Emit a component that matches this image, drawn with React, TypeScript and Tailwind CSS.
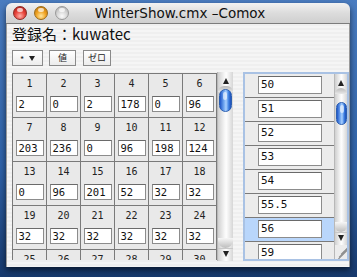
import React from 'react'

const GRID_ROWS: [number, string][][] = [
  [[1, '2'], [2, '0'], [3, '2'], [4, '178'], [5, '0'], [6, '96']],
  [[7, '203'], [8, '236'], [9, '0'], [10, '96'], [11, '198'], [12, '124']],
  [[13, '0'], [14, '96'], [15, '201'], [16, '52'], [17, '32'], [18, '32']],
  [[19, '32'], [20, '32'], [21, '32'], [22, '32'], [23, '32'], [24, '32']],
  [[25, '32'], [26, '32'], [27, '32'], [28, '32'], [29, '32'], [30, '32']],
]

const LIST = ['50', '51', '52', '53', '54', '55.5', '56', '59']

const MONO = 'font-["DejaVu_Sans_Mono",monospace]'

function Light({ tone }: { tone: 'red' | 'yellow' | 'gray' }) {
  const bg =
    tone === 'red'
      ? 'bg-[radial-gradient(circle_at_50%_75%,#ffb0a8_0%,#e8453c_45%,#a8150f_100%)] border-[#8a2a25]'
      : tone === 'yellow'
        ? 'bg-[radial-gradient(circle_at_50%_75%,#ffe7a0_0%,#f0a323_45%,#b06a08_100%)] border-[#9a6a1a]'
        : 'bg-[radial-gradient(circle_at_50%_75%,#fafafa_0%,#d4d4d4_50%,#a8a8a8_100%)] border-[#999]'
  return (
    <span className={`relative w-[14px] h-[14px] rounded-full border ${bg}`}>
      <span className="absolute left-[3px] top-[1px] w-[6px] h-[4px] rounded-full bg-white/70" />
    </span>
  )
}

function Scrollbar({ thumbTop, small }: { thumbTop: number; small?: boolean }) {
  return (
    <div
      className={`${small ? 'w-[13px]' : 'w-[16px]'} h-full flex flex-col items-center border-l border-[#b8b8b8] bg-[linear-gradient(90deg,#d0d0d0,#f7f7f7_45%,#fdfdfd_55%,#d6d6d6)]`}
    >
      <div className="h-[14px] w-full flex items-end justify-center pb-[2px]">
        <span className="w-0 h-0 border-l-[3.5px] border-r-[3.5px] border-b-[6px] border-l-transparent border-r-transparent border-b-[#222]" />
      </div>
      <div className="w-full rounded-t-full h-[6px] bg-[linear-gradient(180deg,#b8b8b8,#e8e8e8)]" />
      <div
        style={{ marginTop: thumbTop }}
        className={`${small ? 'w-[11px]' : 'w-[13px]'} h-[23px] rounded-full border border-[#2c5fb0] bg-[linear-gradient(90deg,#1f56c8,#6fa6f0_35%,#a9d0ff_55%,#3a7de0_80%,#1e4fb8)] relative`}
      >
        <span className="absolute left-[3px] top-[2px] w-[4px] h-[8px] rounded-full bg-white/60" />
      </div>
      <div className="flex-1" />
      <div className="w-full rounded-b-full h-[10px] bg-[linear-gradient(180deg,#f6f6f6,#bdbdbd)]" />
      <div className="h-[13px] w-full flex items-start justify-center pt-[2px] border-t border-[#c8c8c8]">
        <span className="w-0 h-0 border-l-[3.5px] border-r-[3.5px] border-t-[6px] border-l-transparent border-r-transparent border-t-[#222]" />
      </div>
    </div>
  )
}

export default function App() {
  return (
    <div className="w-[357px] h-[277px] overflow-hidden bg-[linear-gradient(180deg,#4a7cc0,#2f62a8_60%,#17396c)] pt-[3px] pl-[6px]">
      <div className="w-[344px] h-[264px] rounded-t-[6px] overflow-hidden flex flex-col shadow-[0_3px_6px_rgba(0,0,0,0.6)]">
        {/* title bar */}
        <div className="h-[21px] flex items-center relative border-b border-[#7c7c7c] bg-[linear-gradient(180deg,#f2f2f2,#dcdcdc_50%,#cfcfcf)]">
          <div className="flex items-center gap-[7px] pl-[7px]">
            <Light tone="red" />
            <Light tone="yellow" />
            <Light tone="gray" />
          </div>
          <span className='absolute left-0 right-0 text-center pl-[4px] text-[13.5px] leading-[20px] text-[#111] font-["DejaVu_Sans",sans-serif]'>
            WinterShow.cmx –Comox
          </span>
        </div>

        {/* body */}
        <div className="flex-1 flex flex-col bg-[repeating-linear-gradient(180deg,#efefef_0px,#efefef_2px,#f5f5f5_2px,#f5f5f5_4px)] border-x border-[#9a9a9a]">
          <div className='pl-[5px] h-[20px] text-[15px] leading-[20px] text-[#111] font-["Noto_Sans_CJK_JP",sans-serif]'>
            登録名：kuwatec
          </div>

          <div className='mt-[6px] ml-[5px] flex h-[16px] text-[9px] text-[#222] font-["Noto_Sans_CJK_JP",sans-serif]'>
            <div className="w-[31px] h-full border border-[#8a8a8a] bg-[linear-gradient(180deg,#ffffff,#ececec)] flex items-center justify-center gap-[5px]">
              <span className="leading-none pt-[2px]">*</span>
              <span className="w-0 h-0 border-l-[3px] border-r-[3px] border-t-[5px] border-l-transparent border-r-transparent border-t-[#222]" />
            </div>
            <div className="ml-[6px] w-[27px] h-full border border-[#8a8a8a] bg-[linear-gradient(180deg,#ffffff,#ececec)] flex items-center justify-center">
              値
            </div>
            <div className="ml-[7px] w-[28px] h-full border border-[#8a8a8a] bg-[linear-gradient(180deg,#ffffff,#ececec)] flex items-center justify-center">
              ゼロ
            </div>
          </div>

          {/* main area */}
          <div className="mt-[6px] ml-[5px] flex h-[189px]">
            <div className="mt-[1px] w-[205px] h-[187px] overflow-hidden border-l border-t border-[#7a7a7a] bg-[#e9e9e9]">
              {GRID_ROWS.map((row, ri) => (
                <div key={ri} className="flex">
                  {row.map(([n, v]) => (
                    <div key={n} className="w-[34px] h-[44px] shrink-0 border-r border-b border-[#7a7a7a] flex flex-col items-center">
                      <div className={`mt-[4px] h-[12px] text-[10px] leading-[12px] text-[#222] ${MONO}`}>{n}</div>
                      <div className={`mt-[6px] w-[28px] h-[16px] bg-white border border-[#8c8c8c] border-t-[#6a6a6a] pl-[2px] text-[10.5px] leading-[14px] text-[#111] ${MONO}`}>
                        {v}
                      </div>
                    </div>
                  ))}
                </div>
              ))}
            </div>
            <Scrollbar thumbTop={-3} />

            <div className="ml-[10px] w-[106px] h-[189px] border-2 border-[#a9c2e4] flex">
              <div className="w-[89px] h-full overflow-hidden">
                {LIST.map((v) => (
                  <div
                    key={v}
                    className={`h-[24px] shrink-0 border-b border-[#7a7a7a] pl-[13px] pt-[2px] ${v === '56' ? 'bg-[#b9d6fb]' : 'bg-[#ececec]'}`}
                  >
                    <div className={`w-[64px] h-[18px] bg-white border border-[#8c8c8c] border-t-[#6a6a6a] pl-[2px] text-[11px] leading-[16px] text-[#111] ${MONO}`}>
                      {v}
                    </div>
                  </div>
                ))}
              </div>
              <div className="flex flex-col h-full">
                <div className="flex-1 min-h-0">
                  <Scrollbar thumbTop={8} small />
                </div>
                <div className="w-[13px] h-[14px] border-l border-[#b8b8b8] bg-[#ececec] relative overflow-hidden">
                  <span className="absolute right-[-2px] bottom-[3px] w-[14px] h-px bg-[#888] rotate-[-45deg]" />
                  <span className="absolute right-[-4px] bottom-[6px] w-[14px] h-px bg-[#888] rotate-[-45deg]" />
                  <span className="absolute right-[-6px] bottom-[9px] w-[14px] h-px bg-[#888] rotate-[-45deg]" />
                </div>
              </div>
            </div>
          </div>
        </div>
      </div>
    </div>
  )
}
